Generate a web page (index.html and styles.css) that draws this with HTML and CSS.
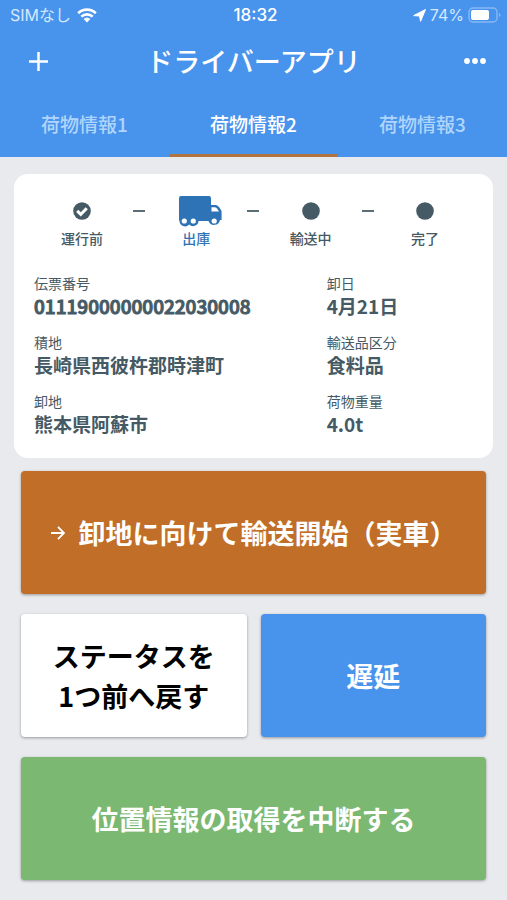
FILE: index.html
```html
<!DOCTYPE html>
<html lang="ja">
<head>
<meta charset="utf-8">
<meta name="viewport" content="width=device-width, initial-scale=1">
<title>ドライバーアプリ</title>
<link rel="stylesheet" href="styles.css">
</head>
<body>
<header class="header">
  <div class="status">
    <div class="status-left">
      <span>SIMなし</span>
      <svg class="wifi" viewBox="0 0 20 15" aria-hidden="true">
        <path d="M1.2 5.3a12.6 12.6 0 0 1 17.6 0M4.3 8.6a8.2 8.2 0 0 1 11.4 0" fill="none" stroke="currentColor" stroke-width="2.7"/>
        <path d="M6.6 11a5 5 0 0 1 6.8 0L10 14.5z" fill="currentColor"/>
      </svg>
    </div>
    <time class="clock">18:32</time>
    <div class="status-right">
      <svg class="location" viewBox="0 0 13 13" aria-hidden="true"><path d="M12.500 .5 7.600 12.300 6.500 7 .7 6.600z" fill="currentColor" stroke="currentColor" stroke-linejoin="round"/></svg>
      <span>74%</span>
      <svg class="battery" viewBox="0 0 33 17" aria-hidden="true">
        <rect x="1" y="1" width="28" height="14" rx="4" fill="none" stroke="currentColor" stroke-opacity=".45" stroke-width="1.4"/>
        <rect x="3" y="3" width="18" height="10" rx="2" fill="#fff"/>
        <path d="M31 6q3 2 0 4z" fill="currentColor" opacity=".5"/>
      </svg>
    </div>
  </div>
  <div class="titlebar">
    <button class="icon-button" type="button" aria-label="追加">
      <svg class="plus" viewBox="0 0 20 20"><path d="M10 0v20M0 10h20" stroke="currentColor" stroke-width="2.6"/></svg>
    </button>
    <h1 class="title">ドライバーアプリ</h1>
    <button class="icon-button" type="button" aria-label="メニュー">
      <svg class="more" viewBox="0 0 22 6"><g fill="currentColor"><circle cx="3" cy="3" r="2.9"/><circle cx="11" cy="3" r="2.9"/><circle cx="19" cy="3" r="2.9"/></g></svg>
    </button>
  </div>
  <nav class="tabs">
    <a class="tab" href="#1">荷物情報1</a>
    <a class="tab tab-active" href="#2" aria-current="page">荷物情報2</a>
    <a class="tab" href="#3">荷物情報3</a>
  </nav>
</header>
<main class="main">
  <section class="card">
    <ol class="steps">
      <li class="step">
        <svg class="dot" viewBox="0 0 18 18" aria-hidden="true"><circle cx="9" cy="9" r="8.8" fill="currentColor"/><path d="M4.2 8.8 7.800 12.300 13.800 6.300" fill="none" stroke="#fff" stroke-width="3"/></svg>
        <span>運行前</span>
      </li>
      <li class="dash" aria-hidden="true"></li>
      <li class="step step-current">
        <svg class="truck" viewBox="0 0 43 31" aria-hidden="true">
          <path d="M2 0H30Q32 0 32 2V9H36.500Q38.500 9 40 11L42 14Q42.600 15 42.600 16V24H41A6 6 0 0 1 29.500 25H19.500A5.500 5.500 0 0 1 10.100 28.500 5.500 5.500 0 0 1 .5 25Q0 25 0 23V2Q0 0 2 0Z" fill="currentColor"/>
          <path d="M32.500 11.200H35.500Q37 11.200 38 12.500L40 15.500H32.500Z" fill="#fff"/>
          <g fill="#fff"><circle cx="5.300" cy="25" r="2.600"/><circle cx="14.300" cy="25" r="2.600"/><circle cx="35.200" cy="25" r="2.600"/></g>
        </svg>
        <span>出庫</span>
      </li>
      <li class="dash" aria-hidden="true"></li>
      <li class="step">
        <svg class="dot" viewBox="0 0 18 18" aria-hidden="true"><circle cx="9" cy="9" r="8.8" fill="currentColor"/></svg>
        <span>輸送中</span>
      </li>
      <li class="dash" aria-hidden="true"></li>
      <li class="step">
        <svg class="dot" viewBox="0 0 18 18" aria-hidden="true"><circle cx="9" cy="9" r="8.8" fill="currentColor"/></svg>
        <span>完了</span>
      </li>
    </ol>
    <dl class="details">
      <div><dt>伝票番号</dt><dd class="number">01119000000022030008</dd></div>
      <div><dt>卸日</dt><dd>4月21日</dd></div>
      <div><dt>積地</dt><dd>長崎県西彼杵郡時津町</dd></div>
      <div><dt>輸送品区分</dt><dd>食料品</dd></div>
      <div><dt>卸地</dt><dd>熊本県阿蘇市</dd></div>
      <div><dt>荷物重量</dt><dd>4.0t</dd></div>
    </dl>
  </section>
  <div class="actions">
    <button class="action action-start" type="button">
      <svg class="arrow" viewBox="0 0 14 14" aria-hidden="true"><path d="M0 7h13M7 .8 13 7 7 13.200" fill="none" stroke="currentColor" stroke-width="1.8"/></svg>
      <span>卸地に向けて輸送開始（実車）</span>
    </button>
    <button class="action action-back" type="button">ステータスを<br>1つ前へ戻す</button>
    <button class="action action-delay" type="button">遅延</button>
    <button class="action action-pause" type="button">位置情報の取得を中断する</button>
  </div>
</main>
</body>
</html>
```
FILE: styles.css
```css
* {
  box-sizing: border-box;
}

body {
  margin: 0;
  min-height: 100vh;
  background: #e8eaed;
  color: #455a64;
  font-family: "Noto Sans CJK JP", sans-serif;
}

button {
  font: inherit;
  border: 0;
  cursor: pointer;
}

svg {
  display: block;
}

.header {
  background: #4893ec;
  color: #fff;
}

.status {
  display: grid;
  grid-template-columns: 1fr auto 1fr;
  align-items: center;
  height: 30px;
  padding: 0 6px 0 10px;
  font: 16px/30px Inter, "Noto Sans CJK JP", sans-serif;
  color: #d5e8ff;
}

.status-left,
.status-right {
  display: flex;
  align-items: center;
  gap: 6px;
}

.status-right {
  justify-content: flex-end;
  gap: 4px;
}

.clock {
  color: #fff;
  font-size: 17px;
  font-weight: 500;
}

.wifi {
  width: 20px;
  height: 15px;
  color: #fff;
}

.location {
  width: 13px;
  height: 13px;
  color: #fff;
}

.battery {
  width: 33px;
  height: 17px;
}

.titlebar {
  display: flex;
  align-items: center;
  height: 62px;
  padding: 0 12px 0 18px;
}

.title {
  flex: 1;
  margin: 0 6px 0 0;
  font-size: 27px;
  font-weight: 500;
  line-height: 62px;
  text-align: center;
}

.icon-button {
  display: grid;
  place-items: center;
  width: 40px;
  height: 40px;
  padding: 0;
  background: none;
  color: #fff;
}

.plus {
  width: 19px;
  height: 19px;
}

.more {
  width: 22px;
  height: 6px;
}

.tabs {
  display: grid;
  grid-template-columns: repeat(3, 1fr);
}

.tab {
  height: 65px;
  border-bottom: 3px solid transparent;
  color: #b0d5fc;
  font-size: 19px;
  font-weight: 500;
  line-height: 64px;
  text-align: center;
  text-decoration: none;
}

.tab-active {
  border-color: #b17440;
  color: #fff;
}

.main {
  padding: 17px 14px 20px;
}

.card {
  padding: 20px;
  border-radius: 14px;
  background: #fff;
}

.steps {
  display: flex;
  align-items: flex-start;
  justify-content: space-between;
  margin: 0 0 25px;
  padding: 0 20px;
  list-style: none;
}

.step {
  display: grid;
  grid-template-rows: 34px 20px;
  justify-items: center;
  align-items: center;
  width: 56px;
  font-size: 14px;
  font-weight: 500;
  line-height: 20px;
}

.step-current {
  color: #2e73b5;
}

.dot {
  width: 18px;
  height: 18px;
}

.truck {
  width: 43px;
  height: 31px;
  margin-left: 8px;
}

.dash {
  width: 12px;
  height: 2px;
  margin-top: 16px;
  background: #5b6d75;
}

.details {
  display: grid;
  grid-template-columns: 292fr 146fr;
  row-gap: 13px;
  margin: 0 0 1px;
}

.details dt {
  font-size: 14px;
  line-height: 20px;
}

.details dd {
  margin: 0;
  font-size: 19px;
  font-weight: 700;
  line-height: 26px;
}

.details .number {
  font-weight: 500;
  -webkit-text-stroke: 1px currentColor;
}

.actions {
  display: grid;
  grid-template-columns: 1fr 1fr;
  gap: 20px 14px;
  padding: 13px 7px 0;
}

.action {
  display: flex;
  align-items: center;
  justify-content: center;
  min-height: 123px;
  padding: 0;
  border-radius: 4px;
  box-shadow: 0 1px 3px rgba(0, 0, 0, 0.35);
  color: #fff;
  font-size: 27px;
  font-weight: 700;
  line-height: 40px;
}

.action-start {
  grid-column: 1 / -1;
  gap: 14px;
  background: #c16e28;
}

.arrow {
  width: 14px;
  height: 14px;
}

.action-back {
  background: #fff;
  color: #000;
}

.action-delay {
  background: #4893ec;
}

.action-pause {
  grid-column: 1 / -1;
  background: #7bb872;
}
```
